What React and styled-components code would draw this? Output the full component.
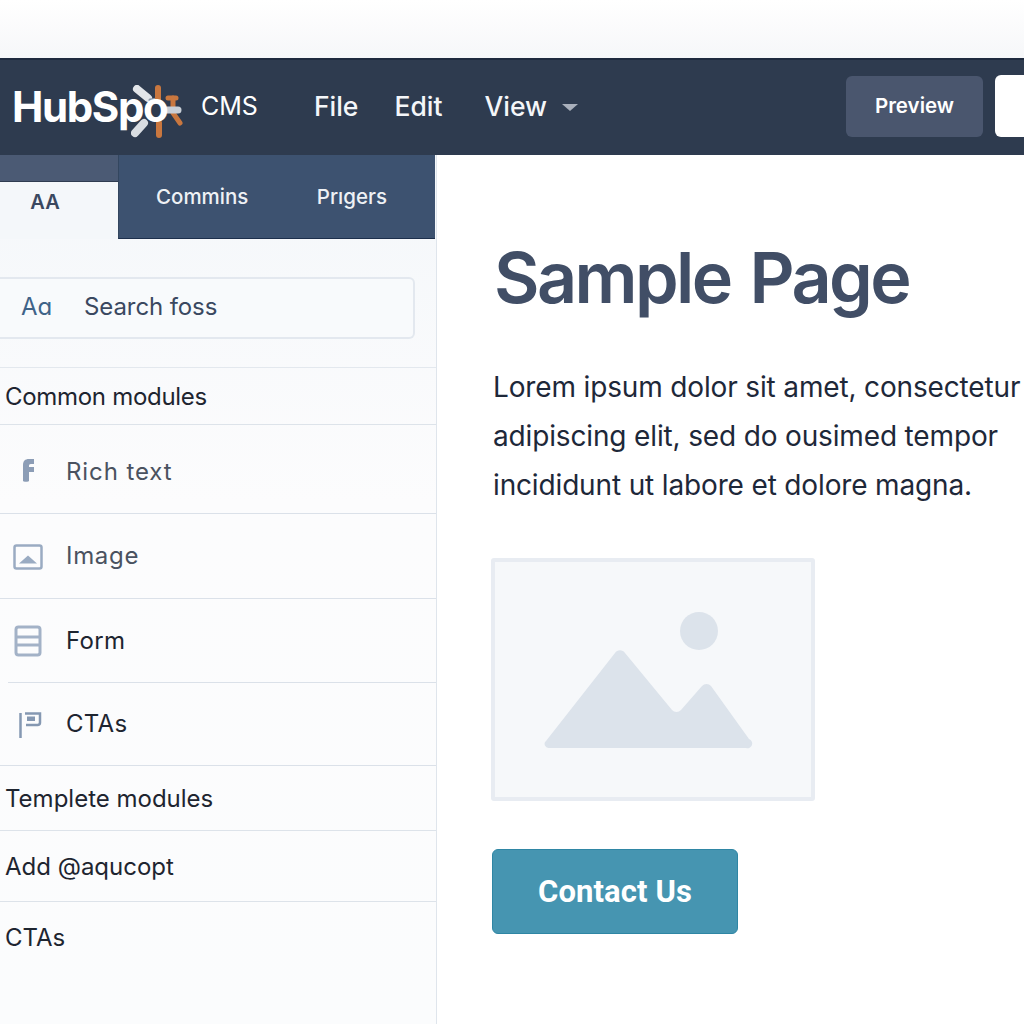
import React from "react";
import styled, { createGlobalStyle } from "styled-components";

const GlobalStyle = createGlobalStyle`
  html, body {
    margin: 0;
    padding: 0;
    background: #ffffff;
    overflow: hidden;
  }
  * {
    box-sizing: border-box;
  }
`;

const Page = styled.div`
  width: 1024px;
  height: 1024px;
  display: flex;
  flex-direction: column;
  overflow: hidden;
  font-family: "Inter", "Liberation Sans", sans-serif;
  background: #ffffff;
`;

const TopStrip = styled.div`
  height: 58px;
  background: linear-gradient(#ffffff, #f6f7f9);
`;

const Header = styled.header`
  height: 97px;
  flex-shrink: 0;
  display: flex;
  align-items: center;
  padding: 0 0 3px 12px;
  background: #2e3b4f;
  border-top: 2px solid #1f2a3e;
`;

const Logo = styled.div`
  position: relative;
  width: 170px;
  height: 60px;
  display: flex;
  align-items: center;
`;

const LogoText = styled.span`
  position: relative;
  font-size: 42px;
  font-weight: 700;
  letter-spacing: -1.4px;
  color: #ffffff;
  z-index: 1;
`;

const LogoMark = styled.svg`
  position: absolute;
  left: 100px;
  top: 3px;
  filter: blur(0.7px);
`;

const Cms = styled.span`
  margin-left: 19px;
  font-size: 25px;
  color: #ffffff;
`;

const Menu = styled.nav`
  display: flex;
  align-items: center;
  margin-left: 56px;
`;

const MenuItem = styled.span`
  display: flex;
  align-items: center;
  gap: 15px;
  margin-right: ${p => p.$gap || 0}px;
  font-size: 26.5px;
  font-weight: 500;
  color: #f4f6f9;
`;

const Caret = styled.span`
  width: 0;
  height: 0;
  margin-top: 3px;
  border-left: 8.5px solid transparent;
  border-right: 8.5px solid transparent;
  border-top: 7px solid #a9b0bc;
`;

const HeaderActions = styled.div`
  margin-left: auto;
  display: flex;
  align-items: center;
  gap: 12px;
  margin-right: -40px;
`;

const PreviewButton = styled.div`
  width: 137px;
  height: 61px;
  display: flex;
  align-items: center;
  justify-content: center;
  padding-bottom: 2px;
  border-radius: 6px;
  background: #4a566e;
  color: #ffffff;
  font-size: 20.5px;
  font-weight: 600;
`;

const WhiteButton = styled.div`
  width: 69px;
  height: 62px;
  border-radius: 6px;
  background: #ffffff;
`;

const Body = styled.div`
  flex: 1;
  display: flex;
  min-height: 0;
`;

const Sidebar = styled.aside`
  width: 437px;
  flex-shrink: 0;
  display: flex;
  flex-direction: column;
  background: linear-gradient(#f4f7fa, #fcfcfd 40%, #fbfcfd);
  border-right: 1px solid #dfe5ec;
`;

const Tabs = styled.div`
  height: 84px;
  width: 435px;
  flex-shrink: 0;
  display: flex;
`;

const ActiveTabSlot = styled.div`
  width: 118px;
  display: flex;
  flex-direction: column;
  background: #4b5a74;
`;

const ActiveTab = styled.div`
  margin-top: 26px;
  flex: 1;
  display: flex;
  align-items: center;
  justify-content: center;
  padding: 0 28px 18px 0;
  background: #f4f7fa;
  border-top: 1px solid #2f3c51;
  font-size: 20px;
  font-weight: 600;
  color: #3a4860;
`;

const TabRest = styled.div`
  flex: 1;
  display: flex;
  align-items: center;
  justify-content: space-between;
  padding: 0 48px 0 37px;
  background: #3d5270;
  border-bottom: 1px solid #1d2f4c;
  border-left: 1px solid #33465f;
  color: #eef1f5;
  font-size: 20.5px;
  font-weight: 500;
`;

const SearchWrap = styled.div`
  height: 129px;
  flex-shrink: 0;
  padding-top: 38px;
  border-bottom: 1px solid #e3e8ee;
`;

const SearchBox = styled.div`
  width: 415px;
  height: 62px;
  display: flex;
  align-items: center;
  padding: 0 0 3px 21px;
  gap: 32px;
  background: #f8fafc;
  border: 2px solid #e3e8ef;
  border-left: none;
  border-radius: 0 6px 6px 0;
  font-size: 24px;
  letter-spacing: -0.1px;
  color: #3a4860;
`;

const SearchAa = styled.span`
  font-size: 24px;
  font-weight: 400;
  color: #3f6388;
`;

const SectionRow = styled.div`
  height: ${p => p.$h}px;
  flex-shrink: 0;
  display: flex;
  align-items: center;
  padding-left: 5px;
  border-bottom: ${p => (p.$last ? "none" : "1px solid #dde3ea")};
  font-size: 24px;
  letter-spacing: ${p => p.$spacing || 0}px;
  color: #1e2530;
`;

const ModuleRow = styled.div`
  position: relative;
  height: ${p => p.$h}px;
  flex-shrink: 0;
  display: flex;
  align-items: center;
  padding: ${p => p.$top || 0}px 0 ${p => p.$bottom || 0}px 66px;
  font-size: 24px;
  letter-spacing: ${p => p.$spacing}px;
  color: ${p => p.$color};
  &::after {
    content: "";
    position: absolute;
    left: ${p => p.$lineFrom || 0}px;
    right: 0;
    bottom: 0;
    height: 1px;
    background: #dbe1e9;
  }
`;

const ModuleIcon = styled.svg`
  position: absolute;
  left: 12px;
  top: 50%;
  transform: translateY(-50%);
`;

const Content = styled.main`
  flex: 1;
  padding: 81px 0 0 57px;
  min-width: 0;
`;

const Title = styled.h1`
  margin: 0;
  font-size: 70px;
  line-height: 84px;
  font-weight: 600;
  letter-spacing: -2.6px;
  word-spacing: 4px;
  color: #414e66;
  white-space: nowrap;
`;

const Paragraph = styled.p`
  margin: 43px 0 0 -1px;
  font-size: 28px;
  line-height: 49px;
  letter-spacing: -0.15px;
  color: #1e2839;
  white-space: nowrap;
`;

const Placeholder = styled.div`
  width: 324px;
  height: 243px;
  margin: 48px 0 0 -3px;
  display: flex;
  align-items: center;
  justify-content: center;
  background: #f6f8fa;
  border: 4px solid #e8ecf2;
  border-radius: 3px;
`;

const ContactButton = styled.div`
  width: 246px;
  height: 85px;
  margin: 48px 0 0 -2px;
  display: flex;
  align-items: center;
  justify-content: center;
  background: #4695b1;
  border: 1px solid #2f86a4;
  border-radius: 6px;
  color: #ffffff;
  font-family: "Roboto", sans-serif;
  font-size: 31px;
  font-weight: 700;
  letter-spacing: 0.1px;
`;

const modules = [
  {
    label: "Rich text",
    h: 89,
    color: "#4a5260",
    spacing: 0.9,
    top: 4,
    icon: (
      <ModuleIcon width="34" height="34" viewBox="0 0 34 34">
        <path d="M11 28V12c0-4 2-6 6-6h5v5h-3c-2 0-2 1-2 2v1h5v5h-5v9c0 1-6 1-6 0z" fill="#8c9db6" />
      </ModuleIcon>
    ),
  },
  {
    label: "Image",
    h: 85,
    color: "#4a5260",
    spacing: 0.7,
    bottom: 2,
    icon: (
      <ModuleIcon width="32" height="28" viewBox="0 0 32 28">
        <rect x="2.5" y="2.5" width="27" height="23" rx="2" fill="none" stroke="#9aabc2" strokeWidth="2.5" />
        <path d="M7 20.5l9-8 9 8z" fill="#9aabc2" />
      </ModuleIcon>
    ),
  },
  {
    label: "Form",
    h: 84,
    color: "#1e2530",
    spacing: 0.3,
    bottom: 2,
    lineFrom: 8,
    icon: (
      <ModuleIcon width="32" height="34" viewBox="0 0 32 34">
        <rect x="4" y="3" width="24" height="28" rx="2.5" fill="none" stroke="#a3b2c7" strokeWidth="3" />
        <path d="M4 13h24M4 21h24" stroke="#a3b2c7" strokeWidth="3" />
      </ModuleIcon>
    ),
  },
  {
    label: "CTAs",
    h: 83,
    color: "#1e2530",
    spacing: 0.3,
    bottom: 2,
    icon: (
      <ModuleIcon width="32" height="30" viewBox="0 0 32 30">
        <path d="M8.5 3v25" stroke="#8598b2" strokeWidth="2.5" />
        <path d="M13 3.5h15v9c0 1.5-1 2.5-2.5 2.5H14" fill="none" stroke="#8598b2" strokeWidth="2.5" />
        <rect x="15" y="6.5" width="8" height="4.5" fill="#8598b2" />
      </ModuleIcon>
    ),
  },
];

const App = () => (
  <Page>
    <GlobalStyle />
    <TopStrip />
    <Header>
      <Logo>
        <LogoMark width="76" height="60" viewBox="0 0 76 60">
          <g strokeLinecap="round" fill="none">
            <path d="M25 10l11 9" stroke="#e2e5e9" strokeWidth="8" />
            <path d="M38 21l8-1" stroke="#8c96a5" strokeWidth="3" />
            <path d="M46 9v12" stroke="#c9773f" strokeWidth="6" />
            <path d="M56 19h8" stroke="#c9773f" strokeWidth="5" />
            <path d="M61 19v15l7 10" stroke="#c9773f" strokeWidth="5" />
            <path d="M47 44v12" stroke="#c9773f" strokeWidth="6" />
            <path d="M32 44l-9 10" stroke="#d9dde2" strokeWidth="8" />
            <path d="M53 31h13" stroke="#c9cfd7" strokeWidth="7" />
          </g>
        </LogoMark>
        <LogoText>HubSpo</LogoText>
      </Logo>
      <Cms>CMS</Cms>
      <Menu>
        <MenuItem $gap={36}>File</MenuItem>
        <MenuItem $gap={42}>Edit</MenuItem>
        <MenuItem>View<Caret /></MenuItem>
      </Menu>
      <HeaderActions>
        <PreviewButton>Preview</PreviewButton>
        <WhiteButton />
      </HeaderActions>
    </Header>
    <Body>
      <Sidebar>
        <Tabs>
          <ActiveTabSlot>
            <ActiveTab>AA</ActiveTab>
          </ActiveTabSlot>
          <TabRest>
            <span>Commins</span>
            <span>Prıgers</span>
          </TabRest>
        </Tabs>
        <SearchWrap>
          <SearchBox>
            <SearchAa>Aɑ</SearchAa>
            <span>Search foss</span>
          </SearchBox>
        </SearchWrap>
        <SectionRow $h={57} $spacing={-0.3}>Common modules</SectionRow>
        {modules.map(m => (
          <ModuleRow
            key={m.label}
            $h={m.h}
            $color={m.color}
            $spacing={m.spacing}
            $top={m.top}
            $bottom={m.bottom}
            $lineFrom={m.lineFrom}
          >
            {m.icon}
            {m.label}
          </ModuleRow>
        ))}
        <SectionRow $h={65}>Templete modules</SectionRow>
        <SectionRow $h={71}>Add @aqucopt</SectionRow>
        <SectionRow $h={70} $last>CTAs</SectionRow>
      </Sidebar>
      <Content>
        <Title>Sample Page</Title>
        <Paragraph>
          Lorem ipsum dolor sit amet, consectetur
          <br />
          adipiscing elit, sed do ousimed tempor
          <br />
          incididunt ut labore et dolore magna.
        </Paragraph>
        <Placeholder>
          <svg width="220" height="150" viewBox="0 0 220 150">
            <circle cx="156" cy="26" r="19" fill="#dce3eb" />
            <path
              d="M6 143a4 4 0 0 1-3-7L72 48a6 6 0 0 1 10 0l47 57a6 6 0 0 0 9 0l21-24a6 6 0 0 1 9 0l38 53a4 4 0 0 1-3 9z"
              fill="#dce3eb"
            />
          </svg>
        </Placeholder>
        <ContactButton>Contact Us</ContactButton>
      </Content>
    </Body>
  </Page>
);

export default App;
